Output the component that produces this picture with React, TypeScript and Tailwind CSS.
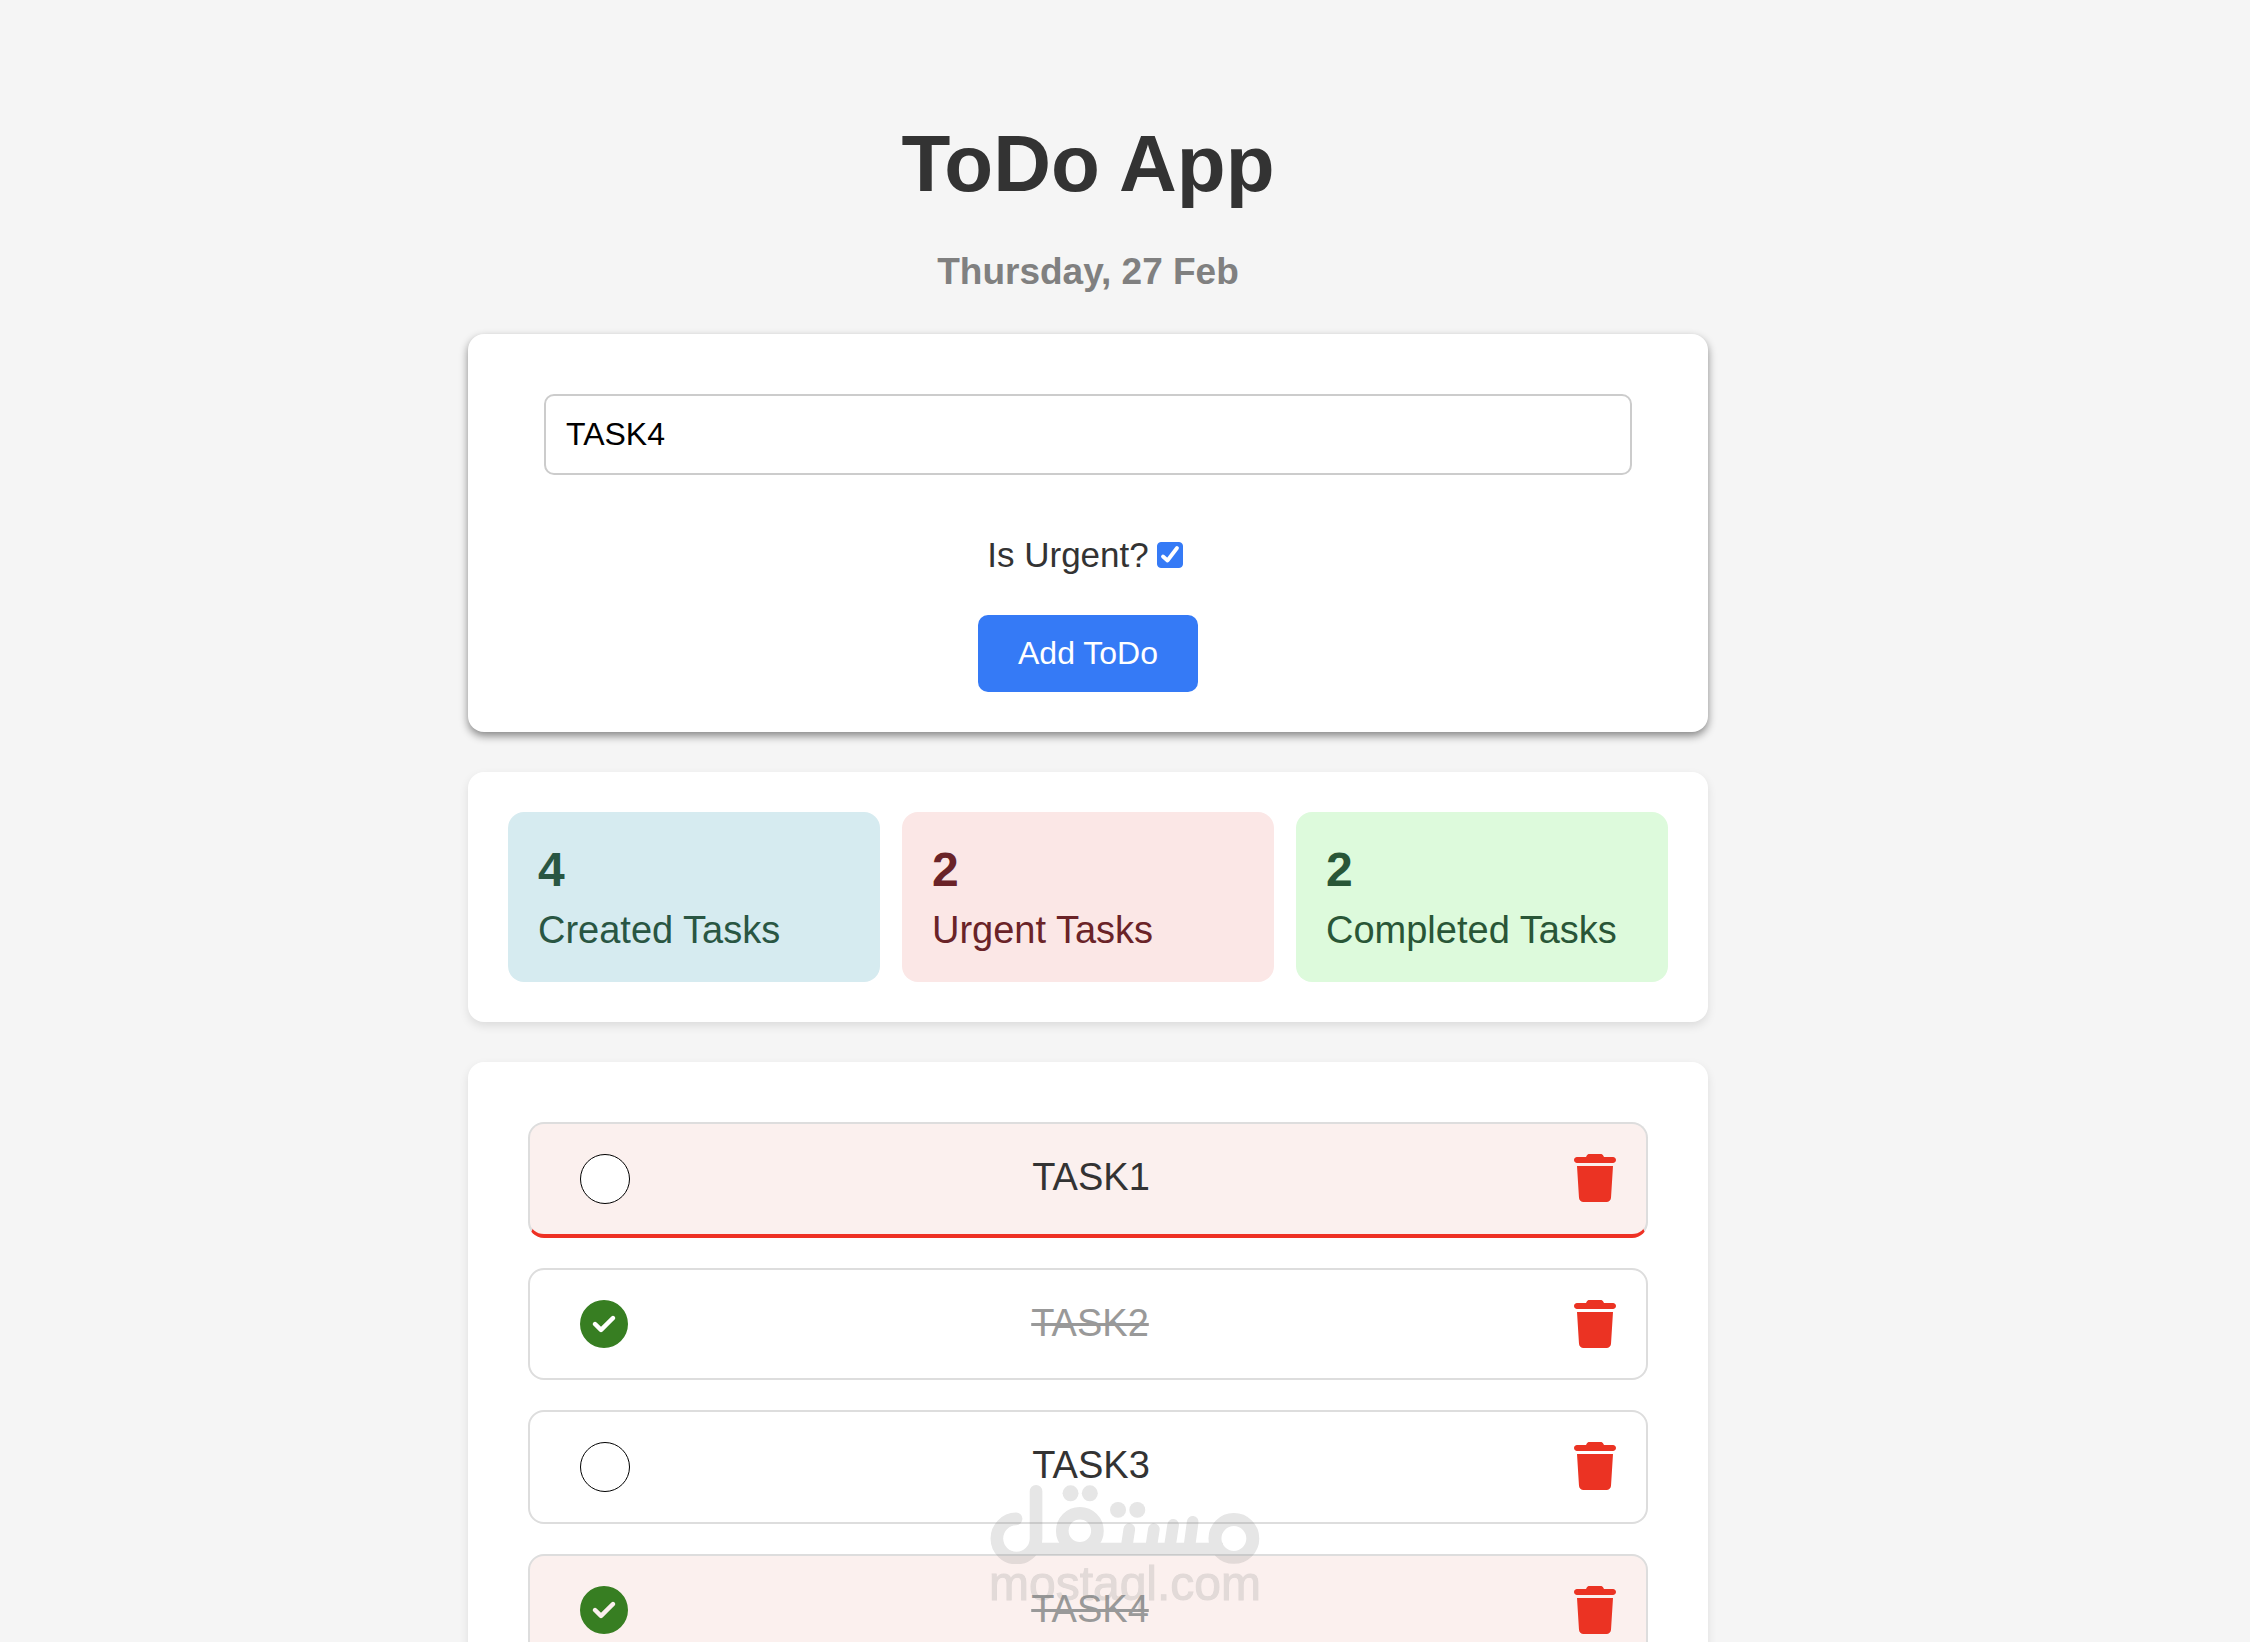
import { useState } from 'react';
import { FaCircleCheck, FaTrash } from 'react-icons/fa6';
import clsx from 'clsx';

interface Task {
  id: number;
  title: string;
  urgent: boolean;
  done: boolean;
}

const initialTasks: Task[] = [
  { id: 1, title: 'TASK1', urgent: true, done: false },
  { id: 2, title: 'TASK2', urgent: false, done: true },
  { id: 3, title: 'TASK3', urgent: false, done: false },
  { id: 4, title: 'TASK4', urgent: true, done: true },
];

interface StatProps {
  count: number;
  label: string;
  className: string;
}

function Stat({ count, label, className }: StatProps) {
  return (
    <div className={clsx('rounded-2xl p-[30px]', className)}>
      <p className="text-[48px] leading-[56px] font-bold">{count}</p>
      <p className="mt-2.5 text-[38px] leading-[44px]">{label}</p>
    </div>
  );
}

interface TaskItemProps {
  task: Task;
  onToggle: () => void;
  onDelete: () => void;
}

function TaskItem({ task, onToggle, onDelete }: TaskItemProps) {
  return (
    <li
      className={clsx(
        'flex items-start rounded-2xl border-2 border-[#dddddd] p-[30px] pl-[50px]',
        task.urgent && 'bg-[#fbf0ee]',
        task.urgent && !task.done && 'border-b-4 border-b-[#ee3124]'
      )}
    >
      <button type="button" onClick={onToggle} aria-label={`Toggle ${task.title}`} className="shrink-0">
        {task.done ? (
          <FaCircleCheck className="size-12 text-[#377e22]" />
        ) : (
          <span className="block size-[50px] rounded-full border border-black bg-white" />
        )}
      </button>
      <span
        className={clsx(
          'flex-1 text-center text-[38px] leading-[46px]',
          task.done ? 'text-[#999999] line-through' : 'text-[#333333]'
        )}
      >
        {task.title}
      </span>
      <button type="button" onClick={onDelete} aria-label={`Delete ${task.title}`} className="shrink-0 pl-[22px]">
        <FaTrash className="h-12 w-[42px] text-[#eb3323]" />
      </button>
    </li>
  );
}

function Watermark() {
  return (
    <div className="pointer-events-none fixed inset-x-0 bottom-[38px] flex flex-col items-center text-[#808080] opacity-20">
      <svg viewBox="120 135 810 238" className="h-[79px] w-[270px]" fill="none" stroke="currentColor" strokeLinecap="round">
        <circle cx="853" cy="296" r="57" strokeWidth="39" />
        <circle cx="389" cy="273" r="53" strokeWidth="38" />
        <path d="M197 237A59 59 0 1 0 257 296V154" strokeWidth="38" />
        <path d="M240 328H820" strokeWidth="38" strokeLinecap="butt" />
        <path d="M729 246L718 328M670 255L659 328M612 268L603 328M538 268L529 328" strokeWidth="35" />
        <g fill="currentColor" stroke="none">
          <circle cx="361" cy="160" r="24" />
          <circle cx="419" cy="160" r="24" />
          <circle cx="504" cy="210" r="24" />
          <circle cx="562" cy="210" r="24" />
        </g>
      </svg>
      <span className="text-[48px] leading-[40px] [-webkit-text-stroke:1px_currentColor]">mostaql.com</span>
    </div>
  );
}

export default function App() {
  const [tasks, setTasks] = useState(initialTasks);
  const [title, setTitle] = useState('TASK4');
  const [urgent, setUrgent] = useState(true);

  const addTask = () => {
    if (!title.trim()) return;
    setTasks([...tasks, { id: Date.now(), title, urgent, done: false }]);
  };

  const toggleTask = (id: number) =>
    setTasks(tasks.map((t) => (t.id === id ? { ...t, done: !t.done } : t)));

  const deleteTask = (id: number) => setTasks(tasks.filter((t) => t.id !== id));

  return (
    <div className="h-screen overflow-hidden bg-[#f5f5f5] pr-[74px] font-['Liberation_Sans',Arial,sans-serif] text-[#333333]">
      <main className="mx-auto flex w-full max-w-[1240px] flex-col gap-10 pt-[118px] pb-10">
        <header className="flex flex-col gap-10 text-center font-bold">
          <h1 className="text-[80px] leading-[92px]">ToDo App</h1>
          <h2 className="text-[37px] leading-[44px] text-[#808080]">Thursday, 27 Feb</h2>
        </header>

        {/* New task form */}
        <form
          onSubmit={(e) => {
            e.preventDefault();
            addTask();
          }}
          className="flex flex-col items-center rounded-2xl bg-white px-[76px] pt-[60px] pb-10 shadow-[0_4px_8px_rgba(0,0,0,0.45)]"
        >
          <input
            type="text"
            aria-label="Task title"
            value={title}
            onChange={(e) => setTitle(e.target.value)}
            className="w-full rounded-[10px] border-2 border-[#cccccc] bg-white p-5 text-[32px] leading-[37px] text-black outline-none"
          />
          <label className="mt-[60px] flex items-center gap-2 pr-1.5 text-[35px] leading-10">
            Is Urgent?
            <span className="grid">
              <input
                type="checkbox"
                checked={urgent}
                onChange={(e) => setUrgent(e.target.checked)}
                className="col-start-1 row-start-1 size-[26px] appearance-none rounded border border-[#767676] bg-white checked:border-[#357af6] checked:bg-[#357af6]"
              />
              {urgent && (
                <svg viewBox="0 0 26 26" className="pointer-events-none col-start-1 row-start-1 size-[26px]">
                  <path
                    d="M6 14.5L10.5 18.5L20 6"
                    fill="none"
                    stroke="white"
                    strokeWidth="3.8"
                    strokeLinecap="round"
                    strokeLinejoin="round"
                  />
                </svg>
              )}
            </span>
          </label>
          <button
            type="submit"
            className="mt-10 rounded-[10px] bg-[#357af6] px-10 py-5 text-[32px] leading-[37px] text-white"
          >
            Add ToDo
          </button>
        </form>

        {/* Stats */}
        <section className="grid grid-cols-3 gap-[22px] rounded-2xl bg-white p-10 shadow-[0_4px_10px_rgba(0,0,0,0.1)]">
          <Stat count={tasks.length} label="Created Tasks" className="bg-[#d6ebf0] text-[#295643]" />
          <Stat
            count={tasks.filter((t) => t.urgent).length}
            label="Urgent Tasks"
            className="bg-[#fbe7e6] text-[#6a2328]"
          />
          <Stat
            count={tasks.filter((t) => t.done).length}
            label="Completed Tasks"
            className="bg-[#ddfadc] text-[#295637]"
          />
        </section>

        {/* Task list */}
        <ul className="flex flex-col gap-[30px] rounded-2xl bg-white p-[60px] shadow-[0_4px_10px_rgba(0,0,0,0.1)]">
          {tasks.map((task) => (
            <TaskItem
              key={task.id}
              task={task}
              onToggle={() => toggleTask(task.id)}
              onDelete={() => deleteTask(task.id)}
            />
          ))}
        </ul>
      </main>
      <Watermark />
    </div>
  );
}
